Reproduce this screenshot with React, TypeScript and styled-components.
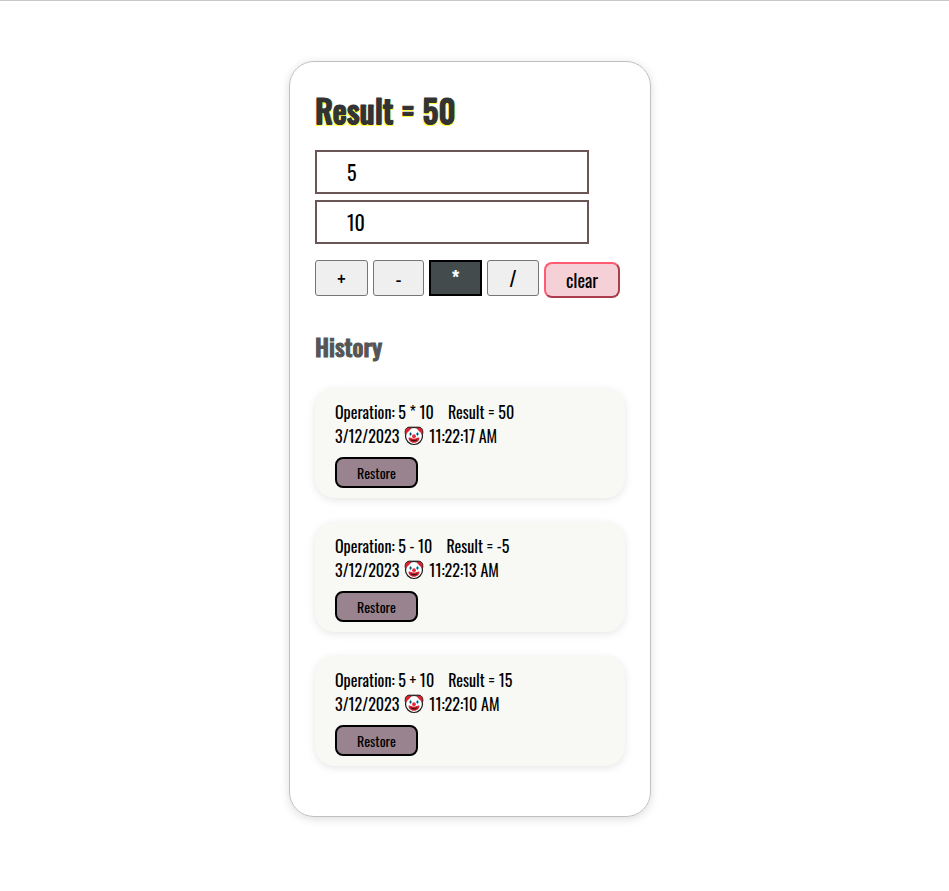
import React, { useState } from "react";
import styled, { createGlobalStyle } from "styled-components";

const GlobalStyle = createGlobalStyle`
  *, *::before, *::after { box-sizing: border-box; }
  body {
    margin: 0;
    background: #fff;
    color: #000;
    font-family: Oswald, "Liberation Sans Narrow", "Roboto Condensed", "Liberation Sans", sans-serif;
    font-size: 16px;
    line-height: 24px;
  }
  button, input { font-family: inherit; color: inherit; }
`;

const Page = styled.main`
  border-top: 1px solid #c8c8c8;
  padding: 60px 9px 60px 0;
  display: flex;
  justify-content: center;
`;

const Card = styled.section`
  width: 100%;
  max-width: 362px;
  padding: 24px 25px 50px;
  border: 1px solid #c0c0c0;
  border-radius: 25px;
  box-shadow: 0 2px 10px rgba(0, 0, 0, 0.14);
`;

const Title = styled.h1`
  margin: 0 0 16px;
  font-size: 32px;
  font-weight: 500;
  line-height: 48px;
  color: #333;
  -webkit-text-stroke: 1px #333;
  text-shadow: 0 1px 0 #333, 1px 2px 0 #ffff3c, -1px 2px 0 #ffff3c, 1px 0 0 #4a9a4a;
`;

const Fields = styled.div`
  display: grid;
  gap: 6px;
  max-width: 274px;
`;

const Field = styled.input`
  width: 100%;
  height: 44px;
  padding: 0 30px;
  border: 2px solid #6b5656;
  border-radius: 0;
  background: #fff;
  font-size: 20px;
  outline: none;
`;

const Toolbar = styled.div`
  display: flex;
  align-items: flex-start;
  gap: 5px;
  margin-top: 16px;
`;

const OperationButton = styled.button<{ $active: boolean; $width: number }>`
  width: ${(p) => p.$width}px;
  height: 36px;
  padding: 0;
  border: ${(p) => (p.$active ? "2px solid #000" : "1px solid #767676")};
  border-radius: ${(p) => (p.$active ? 0 : 3)}px;
  background: ${(p) => (p.$active ? "#434b4d" : "#efefef")};
  color: ${(p) => (p.$active ? "#fff" : "#000")};
  font-size: 20px;
  font-weight: ${(p) => (p.$active ? 600 : 400)};
  line-height: 32px;
`;

const ClearButton = styled.button`
  width: 76px;
  height: 36px;
  margin-top: 2px;
  padding: 0;
  border: 2px outset #ff5c72;
  border-radius: 8px;
  background: #f6d0d7;
  font-size: 18px;
`;

const Heading = styled.h2`
  margin: 30px 0 24px;
  font-size: 24px;
  font-weight: 500;
  line-height: 36px;
  color: #555;
  -webkit-text-stroke: 1px #555;
`;

const HistoryList = styled.ul`
  display: grid;
  gap: 24px;
  margin: 0;
  padding: 0;
  list-style: none;
`;

const HistoryItem = styled.li`
  padding: 12px 20px 10px;
  border-radius: 20px;
  background: #f8f9f4;
  box-shadow: 0 2px 8px rgba(0, 0, 0, 0.1);
`;

const Line = styled.div`
  display: flex;
  align-items: center;
  height: 24px;
  white-space: pre;
`;

const Outcome = styled.span`
  margin-left: 14px;
`;

const Clown = styled.svg`
  width: 20px;
  height: 20px;
  margin: 0 5px;
`;

const RestoreButton = styled.button`
  display: block;
  width: 83px;
  height: 31px;
  margin-top: 9px;
  padding: 0;
  border: 2px solid #000;
  border-radius: 8px;
  background: #98838f;
  font-size: 14px;
`;

const operations = [
  { symbol: "+", width: 53 },
  { symbol: "-", width: 51 },
  { symbol: "*", width: 53 },
  { symbol: "/", width: 52 },
];

const entries = [
  { left: "5", symbol: "*", right: "10", result: "50", time: "11:22:17 AM" },
  { left: "5", symbol: "-", right: "10", result: "-5", time: "11:22:13 AM" },
  { left: "5", symbol: "+", right: "10", result: "15", time: "11:22:10 AM" },
];

function ClownFace() {
  return (
    <Clown viewBox="0 0 20 20" role="img" aria-label="clown face">
      <path d="M1.500 8.500C.600 5 1.500 1.500 5 1.200h10c3.500.300 4.400 3.800 3.500 7.300Z" fill="#c9232d" stroke="#161616" strokeWidth="1" />
      <circle cx="10" cy="10" r="8.500" fill="#fff" stroke="#161616" strokeWidth="1.200" />
      <path d="M1.800 8.500C1 5 2 2 5 1.700l2.200.800C6 4.500 4 5.500 1.800 8.500ZM18.200 8.500C19 5 18 2 15 1.700l-2.200.800C14 4.500 16 5.500 18.200 8.500Z" fill="#d92330" />
      <path d="M6.500 5.500 8 8 6.500 10.500 5 8ZM13.500 5.500 15 8l-1.500 2.500L12 8Z" fill="#38b5d8" />
      <ellipse cx="6.600" cy="8" rx=".7" ry="1" fill="#183b4a" />
      <ellipse cx="13.400" cy="8" rx=".7" ry="1" fill="#183b4a" />
      <path d="M4.700 11.500c1.500-.500 2.600 1 5.300 1s3.800-1.500 5.300-1c.7 2.700-2 5.300-5.300 5.300s-6-2.600-5.300-5.300Z" fill="#d92330" />
      <path d="M6.300 13.200q3.700 1.400 7.400 0-.8 2.300-3.700 2.300t-3.700-2.300Z" fill="#421019" />
      <circle cx="10" cy="10.200" r="1.900" fill="#e5283a" />
    </Clown>
  );
}

export default function App() {
  const [first, setFirst] = useState("5");
  const [second, setSecond] = useState("10");
  const [active, setActive] = useState("*");
  const [result, setResult] = useState("50");
  const [history, setHistory] = useState(entries);

  const calculate = (symbol: string) => {
    const a = Number(first);
    const b = Number(second);
    const value = symbol === "+" ? a + b : symbol === "-" ? a - b : symbol === "*" ? a * b : a / b;
    setActive(symbol);
    setResult(String(value));
  };

  const clear = () => {
    setFirst("");
    setSecond("");
    setActive("");
    setResult("0");
    setHistory([]);
  };

  const restore = (entry: (typeof entries)[number]) => {
    setFirst(entry.left);
    setSecond(entry.right);
    setActive(entry.symbol);
    setResult(entry.result);
  };

  return (
    <>
      <GlobalStyle />
      <Page>
        <Card>
          <Title>Result = {result}</Title>
          <Fields>
            <Field aria-label="First number" inputMode="decimal" value={first} onChange={(e) => setFirst(e.target.value)} />
            <Field aria-label="Second number" inputMode="decimal" value={second} onChange={(e) => setSecond(e.target.value)} />
          </Fields>
          <Toolbar>
            {operations.map(({ symbol, width }) => (
              <OperationButton key={symbol} type="button" $width={width} $active={active === symbol} onClick={() => calculate(symbol)}>
                {symbol}
              </OperationButton>
            ))}
            <ClearButton type="button" onClick={clear}>clear</ClearButton>
          </Toolbar>
          <Heading>History</Heading>
          <HistoryList>
            {history.map((entry) => (
              <HistoryItem key={entry.time}>
                <Line>
                  <span>{`Operation: ${entry.left} ${entry.symbol} ${entry.right}`}</span>
                  <Outcome>{`Result = ${entry.result}`}</Outcome>
                </Line>
                <Line>
                  <span>3/12/2023</span>
                  <ClownFace />
                  <span>{entry.time}</span>
                </Line>
                <RestoreButton type="button" onClick={() => restore(entry)}>Restore</RestoreButton>
              </HistoryItem>
            ))}
          </HistoryList>
        </Card>
      </Page>
    </>
  );
}
